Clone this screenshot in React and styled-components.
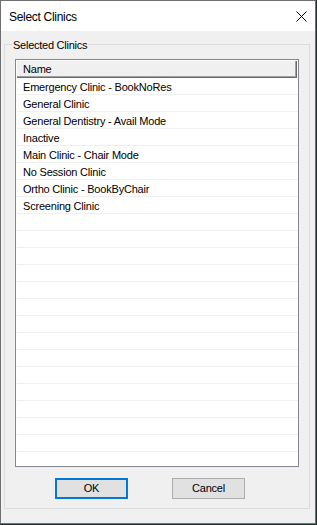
import styled, { createGlobalStyle } from "styled-components";

const clinics = [
  "Emergency Clinic - BookNoRes",
  "General Clinic",
  "General Dentistry - Avail Mode",
  "Inactive",
  "Main Clinic - Chair Mode",
  "No Session Clinic",
  "Ortho Clinic - BookByChair",
  "Screening Clinic",
];

const TOTAL_ROWS = 23;

const GlobalStyle = createGlobalStyle`
  html, body {
    margin: 0;
    padding: 0;
    background: #22302f;
  }
  * {
    box-sizing: border-box;
  }
`;

const Window = styled.div`
  width: 316px;
  height: 524px;
  border: 1px solid #707070;
  background: #f0f0f0;
  display: flex;
  flex-direction: column;
  font-family: "Liberation Sans", Arial, sans-serif;
  color: #000;
`;

const TitleBar = styled.div`
  height: 30px;
  background: #fff;
  display: flex;
  align-items: center;
  justify-content: space-between;
  padding: 0 8px 0 8px;
`;

const Title = styled.span`
  font-size: 12px;
  letter-spacing: -0.3px;
  padding-top: 1px;
`;

const CloseIcon = styled.svg`
  width: 11px;
  height: 11px;
  display: block;
`;

const Body = styled.div`
  flex: 1;
  padding: 13px 5px 14px 3px;
  display: flex;
`;

const Group = styled.div`
  position: relative;
  flex: 1;
  border: 1px solid #dcdcdc;
  padding: 14px 10px 9px 10px;
  display: flex;
  flex-direction: column;
`;

const Legend = styled.span`
  position: absolute;
  top: -6px;
  left: 7px;
  padding: 0 1px;
  background: #f0f0f0;
  font-size: 11px;
  line-height: 13px;
  letter-spacing: -0.25px;
`;

const ListBox = styled.div`
  height: 408px;
  border: 1px solid #828790;
  background: #fff;
  overflow: hidden;
`;

const Header = styled.div`
  width: 281px;
  height: 18px;
  background: #f0f0f0;
  box-shadow: inset 1px 1px #fff, inset -1px -1px #696969,
    inset -2px -2px #a0a0a0;
  padding: 2px 0 0 7px;
  font-size: 11px;
  line-height: 15px;
  letter-spacing: -0.2px;
`;

const Row = styled.div`
  width: 281px;
  height: 17px;
  margin-left: 1px;
  border-bottom: 1px solid #f0f0f0;
  padding: 2px 0 0 6px;
  font-size: 11px;
  line-height: 14px;
  letter-spacing: -0.2px;
  white-space: nowrap;
`;

const Buttons = styled.div`
  display: flex;
  gap: 44px;
  margin-top: 11px;
  padding-left: 40px;
`;

const Button = styled.button`
  width: 73px;
  height: 21px;
  padding: 0;
  margin: 0;
  background: #e1e1e1;
  border: ${(p) => (p.$default ? "2px solid #0078d7" : "1px solid #adadad")};
  font-family: "Liberation Sans", Arial, sans-serif;
  font-size: 11px;
  letter-spacing: -0.2px;
  color: #000;
  line-height: 1;
`;

export default function App() {
  const rows = Array.from({ length: TOTAL_ROWS }, (_, i) => clinics[i] || "");
  return (
    <>
      <GlobalStyle />
      <Window>
        <TitleBar>
          <Title>Select Clinics</Title>
          <CloseIcon viewBox="0 0 11 11">
            <path d="M0.5 0.5 L10.5 10.5 M10.5 0.5 L0.5 10.5" stroke="#000" strokeWidth="1" />
          </CloseIcon>
        </TitleBar>
        <Body>
          <Group>
            <Legend>Selected Clinics</Legend>
            <ListBox>
              <Header>Name</Header>
              {rows.map((name, i) => (
                <Row key={i}>{name}</Row>
              ))}
            </ListBox>
            <Buttons>
              <Button $default>OK</Button>
              <Button>Cancel</Button>
            </Buttons>
          </Group>
        </Body>
      </Window>
    </>
  );
}
